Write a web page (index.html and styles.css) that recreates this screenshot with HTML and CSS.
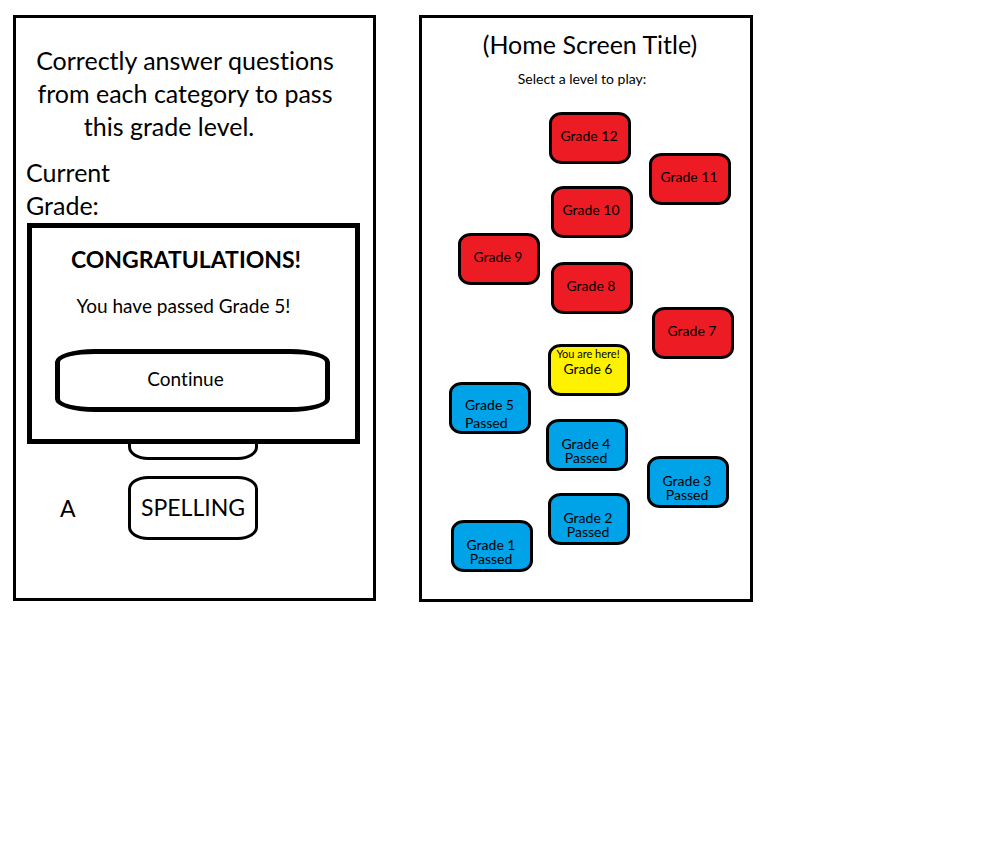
FILE: index.html
```html
<!DOCTYPE html>
<html lang="en">
<head>
<meta charset="utf-8">
<title>Grade Levels</title>
<link rel="stylesheet" href="styles.css">
</head>
<body>
<main class="screens">
  <section class="screen progress">
    <p class="intro">Correctly answer questions<br>from each category to pass<br>this grade level.&nbsp;&nbsp;&nbsp;&nbsp;&nbsp;</p>
    <p class="status">Current Grade:</p>
    <div class="categories">
      <span></span>
      <button class="category" type="button" aria-label="Category"></button>
      <span class="mark">A</span>
      <button class="category" type="button">SPELLING</button>
    </div>
    <div class="dialog" role="dialog" aria-labelledby="dialog-title">
      <h2 class="dialog-title" id="dialog-title">CONGRATULATIONS!</h2>
      <p class="dialog-text">You have passed Grade 5!</p>
      <button class="continue" type="button">Continue</button>
    </div>
  </section>

  <section class="screen home">
    <h1 class="title">(Home Screen Title)</h1>
    <p class="subtitle">Select a level to play:</p>
    <div class="map">
      <button type="button" class="level locked g12">Grade 12</button>
      <button type="button" class="level locked g11">Grade 11</button>
      <button type="button" class="level locked g10">Grade 10</button>
      <button type="button" class="level locked g9">Grade 9</button>
      <button type="button" class="level locked g8">Grade 8</button>
      <button type="button" class="level locked g7">Grade 7</button>
      <button type="button" class="level current g6"><small class="here">You are here!</small><span>Grade 6</span></button>
      <button type="button" class="level passed loose g5"><span>Grade 5</span><span>Passed</span></button>
      <button type="button" class="level passed g4"><span>Grade 4</span><span>Passed</span></button>
      <button type="button" class="level passed g3"><span>Grade 3</span><span>Passed</span></button>
      <button type="button" class="level passed g2"><span>Grade 2</span><span>Passed</span></button>
      <button type="button" class="level passed g1"><span>Grade 1</span><span>Passed</span></button>
    </div>
  </section>
</main>
</body>
</html>
```
FILE: styles.css
```css
* { box-sizing: border-box; }

body {
  margin: 0;
  background: #fff;
  color: #000;
  font-family: Lato, "Open Sans", sans-serif;
  font-size: 25px;
  line-height: 33px;
  font-variant-ligatures: none;
}

h1, h2, p { margin: 0; font-weight: 400; }

button {
  padding: 0;
  color: inherit;
  background: #fff;
  font: inherit;
  font-variant-ligatures: none;
  cursor: pointer;
}

.screens {
  display: grid;
  grid-template-columns: minmax(0, 363fr) minmax(0, 334fr) minmax(0, 192fr);
  column-gap: 43px;
  align-items: start;
  padding: 15px 0 15px 13px;
}

.screen {
  position: relative;
  border: 3px solid #000;
}

/* Progress screen */
.progress { padding: 26px 10px 58px; }

.intro { padding-right: 19px; text-align: center; white-space: nowrap; }

.status { max-width: 100px; margin-top: 13px; }

.categories {
  display: grid;
  grid-template-columns: 102px 130px;
  row-gap: 16px;
  align-items: center;
  padding-top: 174px;
}

.mark { padding-left: 34px; font-size: 23px; }

.category {
  height: 64px;
  padding-bottom: 2px;
  border: 3px solid #000;
  border-radius: 20px / 13px;
  font-size: 23px;
}

.dialog {
  position: absolute;
  top: 205px;
  left: 11px;
  right: 13px;
  display: flex;
  flex-direction: column;
  align-items: center;
  padding: 15px 25px 27px 23px;
  border: 5px solid #000;
  background: #fff;
}

.dialog-title { padding-right: 13px; font-size: 23px; font-weight: 700; }

.dialog-text {
  margin: 18px 0 31px;
  padding-right: 18px;
  font-size: 19px;
  line-height: 24px;
}

.continue {
  width: 100%;
  height: 63px;
  padding-right: 14px;
  padding-bottom: 4px;
  border: 5px solid #000;
  border-radius: 40px / 13px;
  font-size: 19px;
  line-height: 24px;
}

/* Home screen */
.home { text-align: center; }

.title { padding: 10px 0 0 8px; font-size: 25px; }

.subtitle { padding: 9px 8px 0 0; font-size: 14px; line-height: 18px; }

.map { position: relative; height: 511px; }

.level {
  position: absolute;
  display: flex;
  flex-direction: column;
  align-items: center;
  width: 82px;
  height: 52px;
  border: 3px solid #000;
  border-radius: 13px / 11px;
  font-size: 14px;
  line-height: 14px;
  white-space: nowrap;
}

.locked { justify-content: center; padding: 0 2px 4px 0; background: #ed1c24; }
.current { padding-right: 2px; background: #fff200; }
.current .here { font-size: 11px; line-height: 14px; }
.current span { line-height: 16px; }
.passed { padding: 15px 2px 0 0; background: #00a2e8; }
.loose { align-items: flex-start; padding: 11px 0 0 13px; line-height: 18px; }

.g12 { left: calc(50% - 37px); top: 24px; }
.g11 { left: calc(50% + 63px); top: 65px; }
.g10 { left: calc(50% - 35px); top: 98px; }
.g9 { left: calc(50% - 128px); top: 145px; }
.g8 { left: calc(50% - 35px); top: 174px; }
.g7 { left: calc(50% + 66px); top: 219px; }
.g6 { left: calc(50% - 38px); top: 256px; }
.g5 { left: calc(50% - 137px); top: 294px; }
.g4 { left: calc(50% - 40px); top: 331px; }
.g3 { left: calc(50% + 61px); top: 368px; }
.g2 { left: calc(50% - 38px); top: 405px; }
.g1 { left: calc(50% - 135px); top: 432px; }
```
